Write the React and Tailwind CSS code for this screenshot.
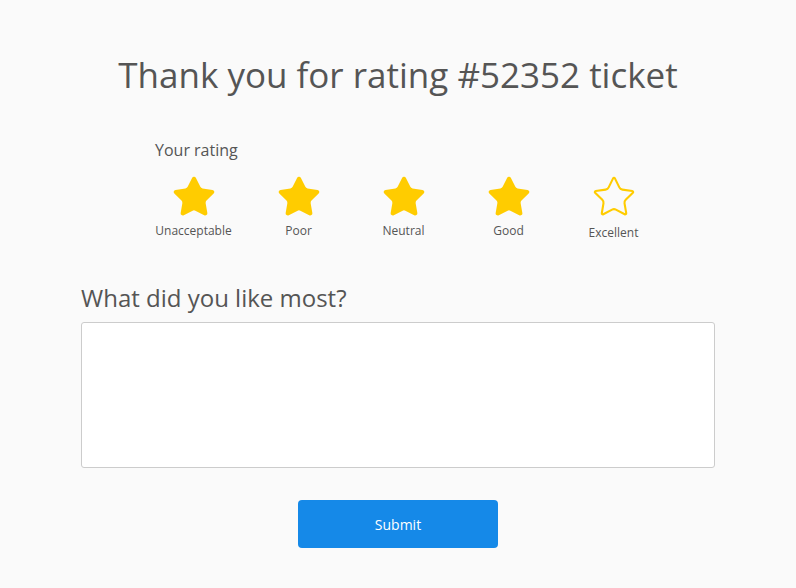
import React, { useState } from "react";

const LABELS = ["Unacceptable", "Poor", "Neutral", "Good", "Excellent"];

function StarIcon({ filled }) {
  return (
    <svg
      width="46"
      height="46"
      viewBox="0 0 24 24"
      fill={filled ? "#ffcc00" : "none"}
      stroke="#ffcc00"
      strokeWidth={filled ? 1.2 : 1.1}
      strokeLinejoin="round"
    >
      <path d="M11.525 2.295a.53.53 0 0 1 .95 0l2.31 4.679a2.123 2.123 0 0 0 1.595 1.16l5.166.756a.53.53 0 0 1 .294.904l-3.736 3.638a2.123 2.123 0 0 0-.611 1.878l.882 5.14a.53.53 0 0 1-.771.56l-4.618-2.428a2.122 2.122 0 0 0-1.973 0L6.396 21.01a.53.53 0 0 1-.77-.56l.881-5.139a2.122 2.122 0 0 0-.611-1.879L2.16 9.795a.53.53 0 0 1 .294-.906l5.165-.755a2.122 2.122 0 0 0 1.597-1.16z" />
    </svg>
  );
}

export default function App() {
  const [rating] = useState(4);
  const [comment, setComment] = useState("");

  return (
    <div
      className="min-h-[588px] bg-[#fafafa] text-[#555555]"
      style={{ fontFamily: '"Open Sans", sans-serif' }}
    >
      <div className="w-[634px] mx-auto pt-[51px]">
        <h1 className="text-center text-[35px] leading-[48px] text-[#555555]">
          Thank you for rating #52352 ticket
        </h1>

        <div className="mt-[40px] pl-[74px] text-[16px] leading-[22px]">
          Your rating
        </div>
        <div className="flex pl-[60px] mt-[13px]">
          {LABELS.map((label, i) => (
            <div key={label} className="w-[105px] flex flex-col items-center">
              <StarIcon filled={i < rating} />
              <div
                className={
                  i < rating
                    ? "text-[12px] leading-[16px] mt-[3px] text-[#555555]"
                    : "text-[12px] leading-[16px] mt-[5px] text-[#555555]"
                }
              >
                {label}
              </div>
            </div>
          ))}
        </div>

        <div className="mt-[42px] text-[24px] leading-[30px]">
          What did you like most?
        </div>
        <textarea
          value={comment}
          onChange={(e) => setComment(e.target.value)}
          className="mt-[9px] block w-full h-[146px] bg-white border border-[#cccccc] rounded-[3px] resize-none outline-none p-2 text-sm"
        />

        <div className="flex justify-center mt-[32px]">
          <button className="w-[200px] h-[48px] rounded-[4px] bg-[#1589e8] text-white text-[14px]">
            Submit
          </button>
        </div>
      </div>
    </div>
  );
}
